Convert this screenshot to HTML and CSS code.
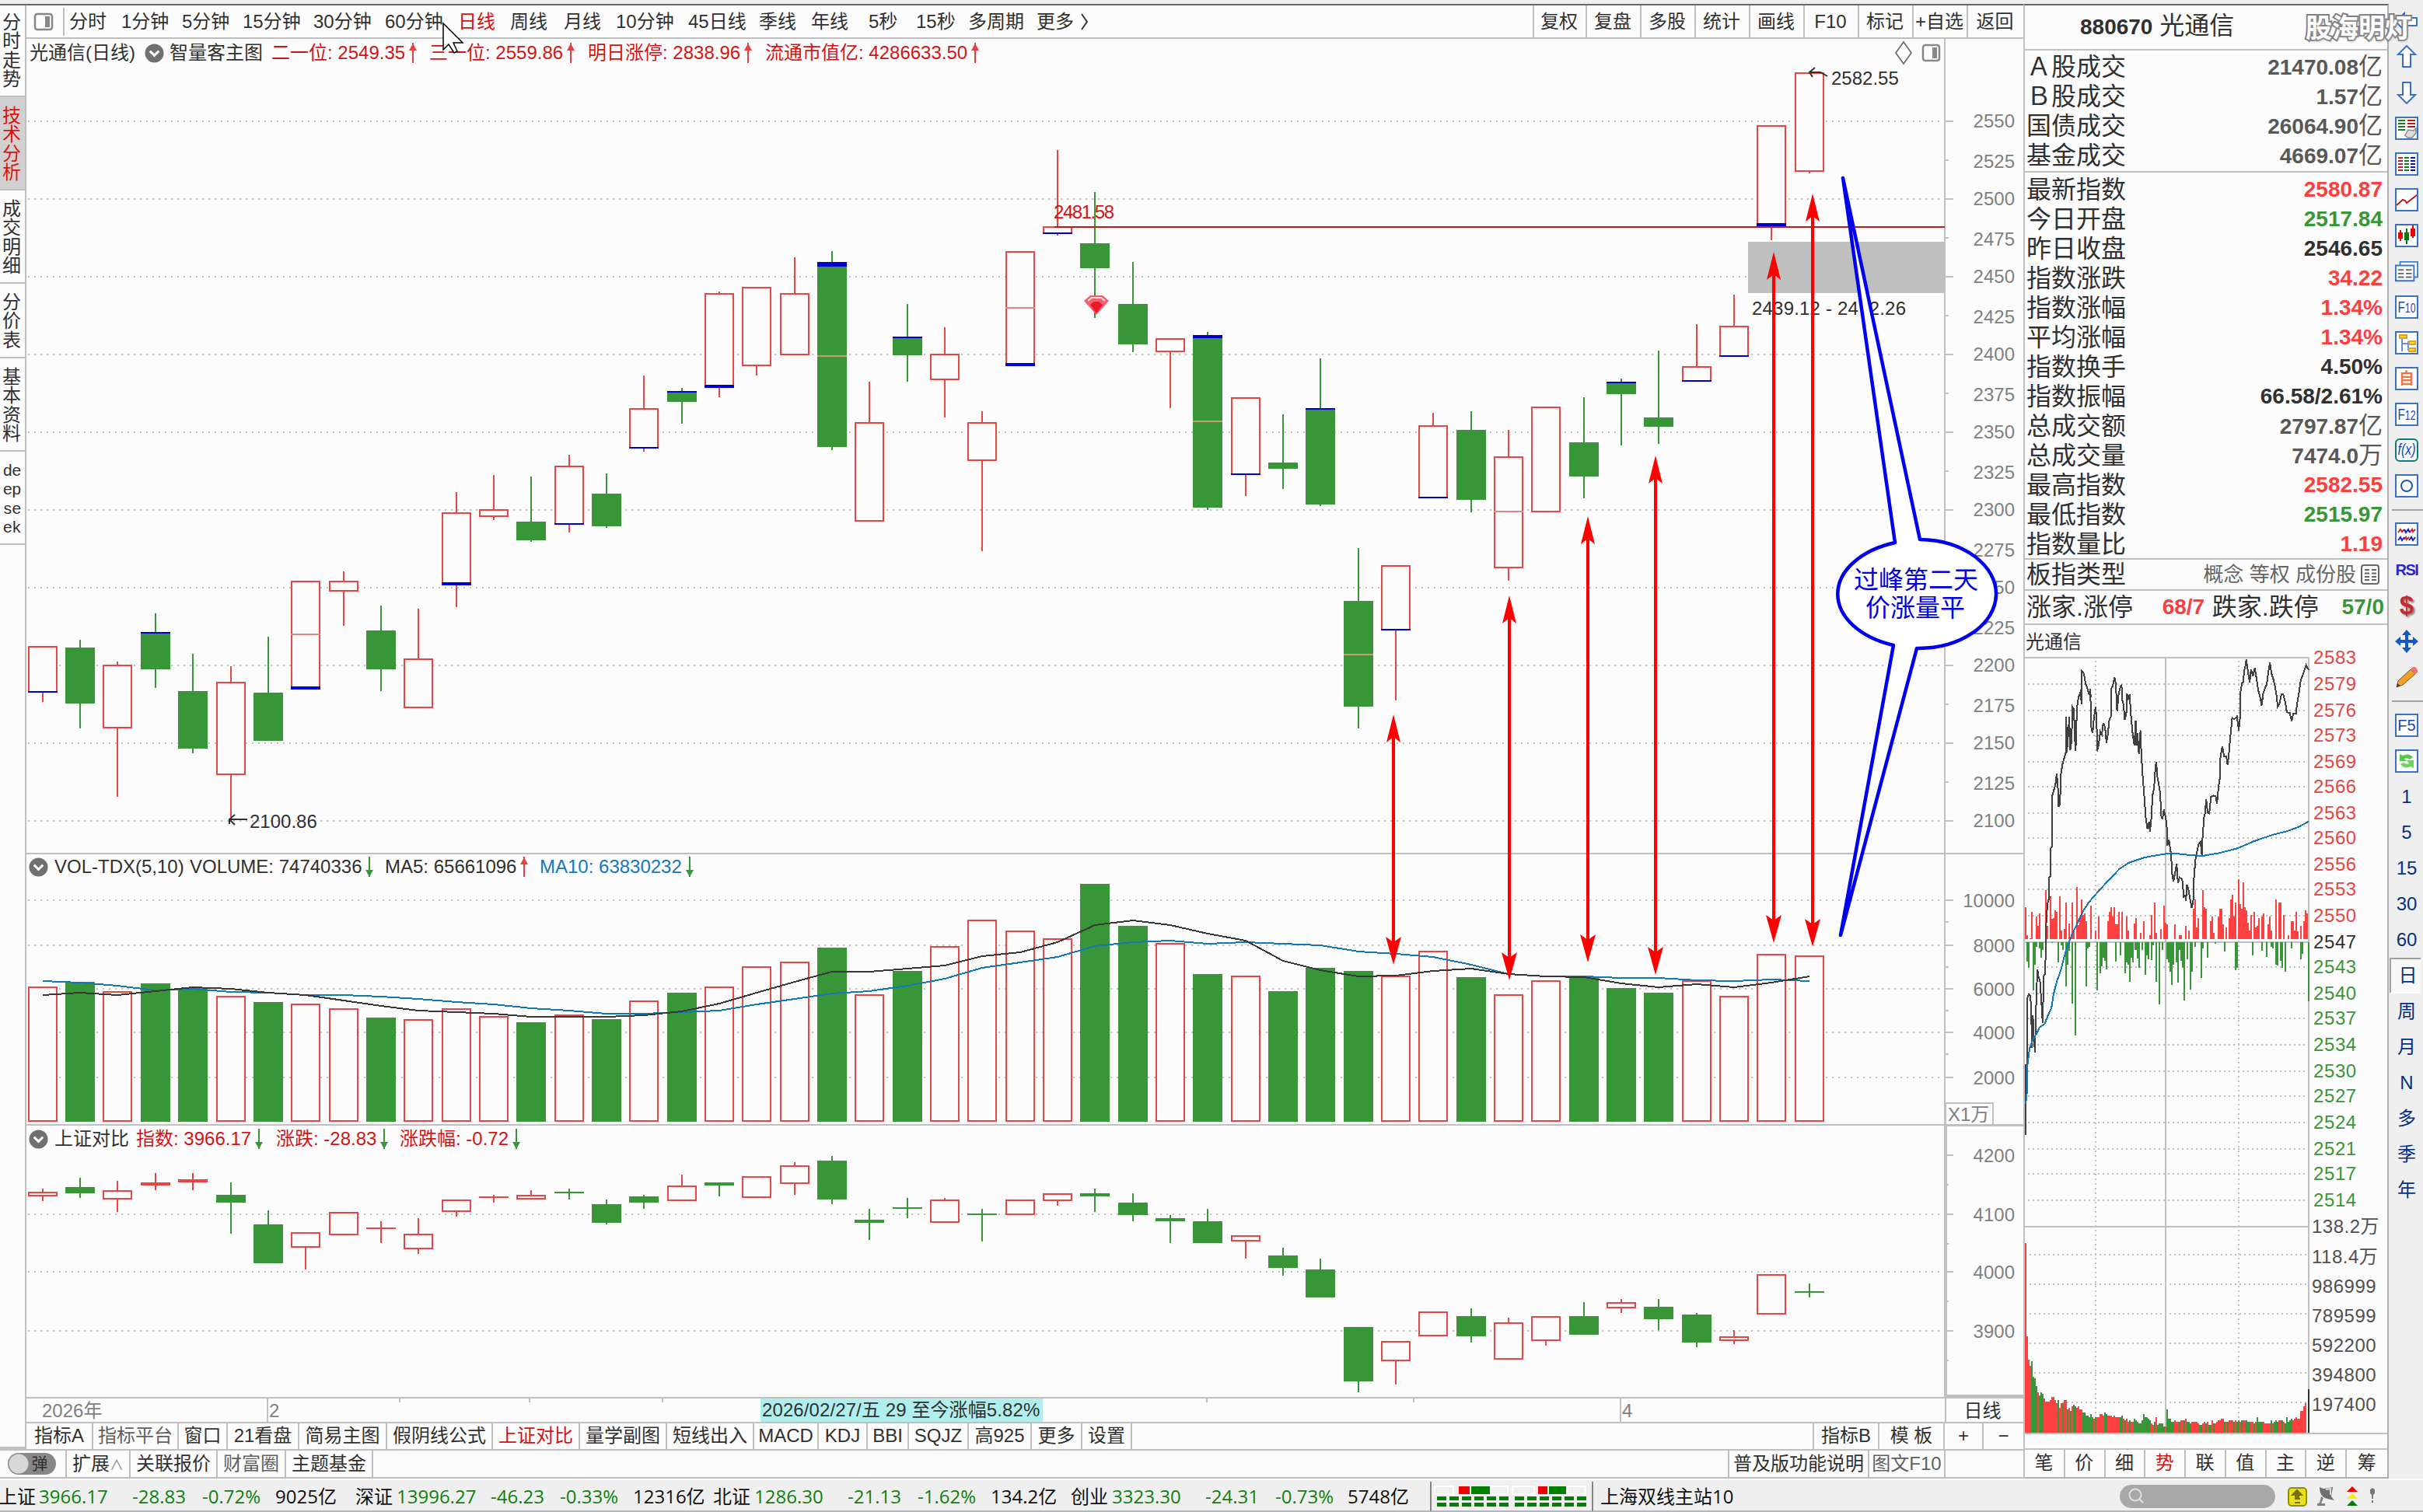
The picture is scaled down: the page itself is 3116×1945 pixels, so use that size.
FILE: index.html
```
<!DOCTYPE html>
<html lang="zh-CN">

<head>
	<meta charset="utf-8">
	<title>光通信 880670</title>
	<link rel="stylesheet" href="styles.css">
</head>

<body>
	<div class="app">
		<div class="work">
			<div class="vtabs">
				<div class="vt t1">分<br>时<br>走<br>势</div>
				<div class="vt t2 on">技<br>术<br>分<br>析</div>
				<div class="vt t3">成<br>交<br>明<br>细</div>
				<div class="vt t4">分<br>价<br>表</div>
				<div class="vt t5">基<br>本<br>资<br>料</div>
				<div class="vt t6">de<br>ep<br>se<br>ek</div>
			</div>

			<div class="center">
				<div class="toolbar">
					<div class="paneicon"><svg width="26" height="24" viewBox="0 0 26 24"><rect x="2" y="2" width="22" height="20" rx="3" fill="none" stroke="#888" stroke-width="2.5"/><rect x="15" y="5" width="6" height="14" fill="#888"/></svg></div>
					<div class="periods">
						<span>分时</span><span>1分钟</span><span>5分钟</span><span>15分钟</span><span>30分钟</span><span>60分钟</span><span class="red">日线</span><span>周线</span><span>月线</span><span>10分钟</span><span>45日线</span><span>季线</span><span>年线</span><span>5秒</span><span>15秒</span><span>多周期</span><span>更多<svg width="14" height="24" viewBox="0 0 14 24"><path d="M4 2l7 10-7 10" fill="none" stroke="#333" stroke-width="2"/></svg></span>
					</div>
					<div class="actions">
						<span>复权</span><span>复盘</span><span>多股</span><span>统计</span><span>画线</span><span>F10</span><span>标记</span><span>+自选</span><span>返回</span>
					</div>
				</div>

				<div class="pane main">
					<div class="head">
						<span>光通信(日线)</span>
						<svg class="drop" viewBox="0 0 26 26"><circle cx="13" cy="13" r="12.5" fill="#707070"/><path d="M7 10l6 6 6-6" fill="none" stroke="#fff" stroke-width="3"/></svg>
						<span>智量客主图</span>
						<span class="red">二一位: 2549.35<i class="up"></i></span>
						<span class="red">三一位: 2559.86<i class="up"></i></span>
						<span class="red">明日涨停: 2838.96<i class="up"></i></span>
						<span class="red">流通市值亿: 4286633.50<i class="up"></i></span>
						<svg class="corner" width="62" height="26" viewBox="0 0 62 26"><path d="M12 -1l10 14-10 14L2 13z" fill="none" stroke="#666" stroke-width="1.6"/><rect x="37" y="3" width="21" height="20" rx="3" fill="none" stroke="#888" stroke-width="2.5"/><rect x="49" y="6" width="6" height="14" fill="#888"/></svg>
					</div>
					<svg id="kline" width="2569" height="1011" viewBox="34 86 2569 1011"></svg>
				</div>

				<div class="pane vol">
					<div class="head">
						<svg class="drop" viewBox="0 0 26 26"><circle cx="13" cy="13" r="12.5" fill="#707070"/><path d="M7 10l6 6 6-6" fill="none" stroke="#fff" stroke-width="3"/></svg>
						<span>VOL-TDX(5,10)</span>
						<span>VOLUME: 74740336<i class="down"></i></span>
						<span>MA5: 65661096<i class="up"></i></span>
						<span class="blue">MA10: 63830232<i class="down"></i></span>
					</div>
					<svg id="volume" width="2569" height="315" viewBox="34 1131 2569 315"></svg>
				</div>

				<div class="pane cmp">
					<div class="head">
						<svg class="drop" viewBox="0 0 26 26"><circle cx="13" cy="13" r="12.5" fill="#707070"/><path d="M7 10l6 6 6-6" fill="none" stroke="#fff" stroke-width="3"/></svg>
						<span>上证对比</span>
						<span class="red">指数: 3966.17<i class="down"></i></span>
						<span class="red">涨跌: -28.83<i class="down"></i></span>
						<span class="red">涨跌幅: -0.72<i class="down"></i></span>
					</div>
					<svg id="compare" width="2569" height="315" viewBox="34 1482 2569 315"></svg>
				</div>

				<div class="dates">
					<span class="d1">2026年</span><span class="d2">2</span>
					<span class="now">2026/02/27/五 29 至今涨幅5.82%</span>
					<span class="d4">4</span><span class="cyc">日线</span>
				</div>
				<div class="indic">
					<span>指标A</span><span class="dim">指标平台</span><span>窗口</span><span>21看盘</span><span>简易主图</span><span>假阴线公式</span><span class="red">上证对比</span><span>量学副图</span><span>短线出入</span><span>MACD</span><span>KDJ</span><span>BBI</span><span>SQJZ</span><span>高925</span><span>更多</span><span>设置</span><b></b><span>指标B</span><span>模 板</span><span>+</span><span>−</span>
				</div>
			</div>

			<div class="bottom">
				<span class="tog"><i>弹</i></span><span>扩展<small>∧</small></span><span>关联报价</span><span class="dim">财富圈</span><span>主题基金</span><b></b><span>普及版功能说明</span><span class="dim">图文F10</span><span></span>
			</div>
		</div>

		<div class="quote">
			<div class="name"><b>880670</b> 光通信</div>
			<div class="rows gray">
				<p><span>Ａ股成交</span><b>21470.08<i>亿</i></b></p>
				<p><span>Ｂ股成交</span><b>1.57<i>亿</i></b></p>
				<p><span>国债成交</span><b>26064.90<i>亿</i></b></p>
				<p><span>基金成交</span><b>4669.07<i>亿</i></b></p>
			</div>
			<div class="rows">
				<p><span>最新指数</span><b class="r">2580.87</b></p>
				<p><span>今日开盘</span><b class="g">2517.84</b></p>
				<p><span>昨日收盘</span><b>2546.65</b></p>
				<p><span>指数涨跌</span><b class="r">34.22</b></p>
				<p><span>指数涨幅</span><b class="r">1.34%</b></p>
				<p><span>平均涨幅</span><b class="r">1.34%</b></p>
				<p><span>指数换手</span><b>4.50%</b></p>
				<p><span>指数振幅</span><b>66.58/2.61%</b></p>
				<p class="gray"><span>总成交额</span><b>2797.87<i>亿</i></b></p>
				<p class="gray"><span>总成交量</span><b>7474.0<i>万</i></b></p>
				<p><span>最高指数</span><b class="r">2582.55</b></p>
				<p><span>最低指数</span><b class="g">2515.97</b></p>
				<p><span>指数量比</span><b class="r">1.19</b></p>
			</div>
			<div class="kind"><span>板指类型</span><em>概念 等权 成份股</em><svg width="26" height="28" viewBox="0 0 26 28"><rect x="2" y="2" width="22" height="24" rx="3" fill="none" stroke="#666" stroke-width="2"/><path d="M6 8h6M6 12.500h6M6 17h6M6 21h6M15 8h6M15 12.500h6M15 17h6M15 21h6" stroke="#666" stroke-width="2"/></svg></div>
			<div class="updown"><span>涨家.涨停</span><b class="r">68/7</b><span>跌家.跌停</span><b class="g">57/0</b></div>
			<div class="mini">光通信</div>
			<svg id="intraday" width="466" height="1018" viewBox="2604 845 466 1018"></svg>
			<div class="qtabs"><span>笔</span><span>价</span><span>细</span><span class="red">势</span><span>联</span><span>值</span><span>主</span><span>逆</span><span>筹</span></div>
		</div>

		<div class="tools">
			<div class="back"><svg viewBox="0 0 30 30"><path d="M1 15L12 4v6h16v10H12v6z" fill="#fff" stroke="#3a70c8" stroke-width="2"/></svg></div>
			<div><svg viewBox="0 0 30 30"><path d="M15 1l11 11h-6v16H10V12H4z" fill="#fff" stroke="#3a70c8" stroke-width="2"/></svg></div>
			<div><svg viewBox="0 0 30 30"><path d="M15 29L4 18h6V2h10v16h6z" fill="#fff" stroke="#3a70c8" stroke-width="2"/></svg></div>
			<div><svg class="bx" viewBox="2 2 26 26"><path d="M4 5h9M4 9h9M4 13h9M4 17h9" stroke="#1a7a1a" stroke-width="2"/><path d="M16 5h10M16 9h10M16 13h10" stroke="#c01818" stroke-width="2"/><path d="M13 24l4-7 7 1 3-3v6l-5 6h-6z" fill="#ddd" stroke="#888" stroke-width="1.500"/></svg></div>
			<div><svg class="bx" viewBox="2 2 26 26"><path d="M4 7h6M4 11h6M4 15h6M4 19h6M4 23h6" stroke="#c02020" stroke-width="2"/><path d="M12 7h6M12 11h6M12 15h6M12 19h6M12 23h6" stroke="#1a7a1a" stroke-width="2"/><path d="M20 7h6M20 11h6M20 15h6M20 19h6M20 23h6" stroke="#1010b0" stroke-width="2"/></svg></div>
			<div><svg class="bx" viewBox="2 2 26 26"><path d="M2 22l8-7 3 1 2 3L28 9" fill="none" stroke="#c01818" stroke-width="2"/></svg></div>
			<div><svg class="bx" viewBox="2 2 26 26"><path d="M4 11h6v8H4zM6 8h2v14H6zM20 6h6v10h-6zM22 2h2v16h-2z" fill="#f00000"/><path d="M12 11h6v10h-6zM14 6h2v20h-2z" fill="#087808"/></svg></div>
			<div><svg viewBox="0 0 32 30"><path d="M7 2h24v21H7z" fill="#fff" stroke="#3a80e0" stroke-width="2"/><path d="M1 7h25v21H1z" fill="#fff" stroke="#3a70c8" stroke-width="2"/><path d="M4 13h8M15 13h8M4 18h8M15 18h8M4 23h8M15 23h8" stroke="#666" stroke-width="2"/></svg></div>
			<div><svg class="bx" viewBox="2 2 26 26"><text x="15" y="22" text-anchor="middle" textLength="23" lengthAdjust="spacingAndGlyphs">F<tspan font-size="16">10</tspan></text></svg></div>
			<div><svg class="bx" viewBox="2 2 26 26"><path d="M9 10v16M9 16h8v8h3M17 13v4" fill="none" stroke="#6a90d8" stroke-width="2"/><path d="M6 5h9v4H6zM18 13h8v4h-8zM18 22h8v4h-8z" fill="#ffe020" stroke="#e0a020" stroke-width="2"/></svg></div>
			<div><svg class="bx" viewBox="2 2 26 26"><text class="zi" x="15" y="22" text-anchor="middle">自</text></svg></div>
			<div><svg class="bx" viewBox="2 2 26 26"><text x="15" y="22" text-anchor="middle" textLength="23" lengthAdjust="spacingAndGlyphs">F<tspan font-size="16">12</tspan></text></svg></div>
			<div><svg viewBox="0 0 30 30"><rect x="1" y="1" width="28" height="28" rx="5" fill="#f4fafa" stroke="#107878" stroke-width="2"/><text x="15" y="21" text-anchor="middle" font-style="italic" textLength="23" lengthAdjust="spacingAndGlyphs">f(x)</text></svg></div>
			<div><svg class="bx" viewBox="2 2 26 26"><circle cx="15" cy="15" r="7" fill="none" stroke="#2058b0" stroke-width="2"/></svg></div>
			<hr>
			<div><svg class="bx" viewBox="2 2 26 26"><path d="M4 13l3-4 2 3 3-3M19 13l3-4 1 3 3-3M12 22l2-3 1 3 3-3" fill="none" stroke="#d02020" stroke-width="2"/><path d="M12 9l2 4 3-4 2 4M4 23l3-4 2 4 3-4M18 23l3-4 2 4 3-4" fill="none" stroke="#2020d0" stroke-width="2"/></svg></div>
			<div class="rsi">RSI</div>
			<div class="cash">$</div>
			<div><svg viewBox="0 0 30 30"><path d="M15 0l6 7h-4v6h6V9l7 6-7 6v-4h-6v6h4l-6 7-6-7h4v-6H7v4l-7-6 7-6v4h6V7H9z" fill="#1458c8"/></svg></div>
			<div><svg viewBox="0 0 30 30"><path d="M2 28l2-8L20 5l6 6L10 25z" fill="#f0a028" stroke="#7a5a30" stroke-width="1"/><path d="M20 5l3-3q3-1 5 2t1 5l-3 2z" fill="#e87880"/><path d="M2 28l1-5 4 3z" fill="#444"/></svg></div>
			<hr>
			<div><svg class="bx" viewBox="2 2 26 26"><text x="15" y="22" text-anchor="middle">F5</text></svg></div>
			<div><svg class="bx" viewBox="2 2 26 26"><path d="M6 15V6l4 2q8-4 13 2l-4 3q-4-3-7-1l3 3z" fill="#58c848"/><path d="M24 14v10l-4-2q-8 4-13-3l4-2q4 3 7 1l-3-4z" fill="#70d060"/></svg></div>
			<div>1</div><div>5</div><div>15</div><div>30</div><div>60</div><div class="sel">日</div><div>周</div><div>月</div><div>N</div><div>多</div><div>季</div><div>年</div>
		</div>

		<div class="status">
			<div class="ticker">
				<span>上证</span><em>3966.17</em><em>-28.83</em><em>-0.72%</em><span>9025亿</span>
				<span>深证</span><em>13996.27</em><em>-46.23</em><em>-0.33%</em><span>12316亿</span>
				<span>北证</span><em>1286.30</em><em>-21.13</em><em>-1.62%</em><span>134.2亿</span>
				<span>创业</span><em>3323.30</em><em>-24.31</em><em>-0.73%</em><span>5748亿</span>
			</div>
			<svg class="leds" width="208" height="38" viewBox="1839 1905 208 38">
				<path d="M1840 1905v38" stroke="#888" stroke-width="2"/>
				<path d="M1845 1911h24v10h-24zM1917 1911h22v10h-22zM1945 1911h28v10h-28zM2016 1911h23v10h-23z" fill="none" stroke="#fff" stroke-width="2"/>
				<path d="M1876 1911h14v10h-14zM1978 1911h12v10h-12z" fill="#f00000"/>
				<path d="M1892 1911h24v10h-24zM1992 1911h22v10h-22z" fill="#008000"/>
				<path d="M1848 1926.500h93M1848 1934.500h93M1948 1926.500h93M1948 1934.500h93" stroke="#008000" stroke-width="5" stroke-dasharray="12 4"/>
			</svg>
			<div class="host">上海双线主站10</div>
			<div class="search"><svg width="22" height="22" viewBox="0 0 22 22"><circle cx="9" cy="9" r="7.500" fill="none" stroke="#e0e0e0" stroke-width="2"/><path d="M14 14l5 5" stroke="#e0e0e0" stroke-width="2"/></svg></div>
			<svg class="tray" width="128" height="30" viewBox="2940 1908 128 30">
				<rect x="2943" y="1912" width="23" height="23" rx="4" fill="#e8e020" stroke="#908c10" stroke-width="2"/><path d="M2954 1915l6 6h-4v3h-4v-3h-4zM2951 1926h7M2951 1931h7" fill="#777010" stroke="#777010" stroke-width="2"/>
				<path d="M2983 1911l5 2 12-2-2 12 4 5-9-2q-10-2-10-15z" fill="#707070"/><path d="M2991 1914l6-1v8" fill="none" stroke="#ddd" stroke-width="2"/><path d="M2988 1925l-3 7h5v3h-10v-3l3-1 2-8z" fill="#808080"/>
				<path d="M3025 1910l7 7h-14z" fill="#f00000"/><path d="M3025 1919l7 7h-14z" fill="#f4f000"/><path d="M3025 1928l7 7h-14z" fill="#087808"/>
				<path d="M3048 1914l3-2 3 2v5l-3 3-3-3zM3050 1920h2v6h-2zM3050 1928h2v3h-2z" fill="#777"/>
			</svg>
		</div>

		<svg id="marks" class="overlay" width="3116" height="1945" viewBox="0 0 3116 1945"></svg>
		<div class="wm">股海明灯</div>
	</div>
	<script src="chart.js"></script>
</body>

</html>
```
FILE: styles.css
```
* {
	box-sizing:border-box;
}

body {
	margin:0;
	width:3116px;
	height:1945px;
	overflow:hidden;
	background:#efefef;
	color:#303030;
	font:24px/28px "Liberation Sans","Noto Sans CJK SC",sans-serif;
	white-space:nowrap;
}

p {
	margin:0;
}

i, em {
	font-style:normal;
}

svg {
	display:block;
	flex:none;
}

.red {
	color:#d41414;
}

.blue {
	color:#1478c0;
}

.dim {
	color:#606060;
}

.app {
	position:relative;
	height:1945px;
	padding-top:5px;
	display:grid;
	grid-template-columns:2602px 470px 44px;
	grid-template-rows:1897px 43px;
	border-bottom:2px solid #b0b8c0;
}

/* left part : side tabs, charts, bottom tabs */
.work {
	display:grid;
	grid-template-columns:34px 2568px;
	grid-template-rows:1857px 38px;
	background:#fcfcfc;
	border-top:2px solid #666;
}

.vtabs {
	display:flex;
	flex-direction:column;
	border-right:2px solid #c0c0c0;
	border-bottom:3px solid #c0c0c0;
	line-height:24.3px;
	text-align:center;
	padding-right:2px;
}

.vt {
	display:flex;
	flex-direction:column;
	justify-content:center;
	margin-right:-2px;
	border-bottom:2px solid #c0c0c0;
	padding:3px 2px 0 0;
}
.t1 { height:118px; padding-top:10px; justify-content:flex-start; }
.t2 { height:120px; }
.t3 { height:120px; }
.t4 { height:96px; }
.t5 { height:120px; }
.t6 {
	height:120px;
	padding-top:7px;
	font-family:"Liberation Mono",monospace;
	font-size:21px;
	letter-spacing:-1px;
}
.vt.on {
	background:#d0d0d0;
	color:#e01010;
}

.center {
	display:flex;
	flex-direction:column;
}

.toolbar {
	height:43px;
	display:flex;
	align-items:center;
	border-bottom:2px solid #c0c0c0;
}

.paneicon {
	width:49px;
	height:36px;
	padding:6px 0 0 9px;
	border-right:2px solid #c0c0c0;
}

.periods {
	flex:1;
	display:grid;
	padding-left:6px;
	grid-template-columns:67px 78px 78px 91px 92px 94px 67px 69px 67px 93px 91px 67px 74px 61px 67px 88px 90px;
}
.periods svg {
	display:inline-block;
	vertical-align:-4px;
	margin-left:6px;
}

.actions {
	display:flex;
	align-self:stretch;
}
.actions span {
	width:70px;
	padding-right:2px;
	line-height:41px;
	text-align:center;
	border-left:2px solid #c0c0c0;
}
.actions span:first-child { width:68px; }
.actions span:last-child { width:73px; }

.head {
	width:2468px;
	display:grid;
	align-items:center;
	border-right:2px solid #c0c0c0;
	position:relative;
}
.main .head { height:36px; padding-left:4px; grid-template-columns:148px 32px 131px 203px 204px 228px 1452px 62px; }
.vol .head { height:32px; padding-left:3px; grid-template-columns:33px 174px 251px 199px 300px; }
.cmp .head { height:34px; padding-left:3px; grid-template-columns:33px 105px 180px 159px 300px; }

.vol, .cmp {
	border-top:2px solid #c0c0c0;
}
.pane svg {
	overflow:visible;
}

.drop {
	width:25px;
	height:25px;
}

/* trend arrows behind a value */
.up, .down {
	display:inline-block;
	width:10px;
	height:26px;
	margin-left:5px;
	vertical-align:-5px;
	background:linear-gradient(#e84040,#e84040) center/2px 100% no-repeat;
	position:relative;
}
.down {
	background-image:linear-gradient(#389638,#389638);
}
.up:before, .down:before {
	content:"";
	position:absolute;
	left:0;
	top:1px;
	border:5px solid transparent;
	border-top:0;
	border-bottom:9px solid #e84040;
}
.down:before {
	top:17px;
	border-bottom:0;
	border-top:9px solid #389638;
}

.dates {
	height:32px;
	display:grid;
	grid-template-columns:309px 635px 363px 742px 418px 101px;
	border-top:2px solid #c0c0c0;
	line-height:32px;
	color:#808080;
}
.dates .d1 { padding-left:20px; }
.dates .d2, .dates .d4 { border-left:2px solid #c0c0c0; padding-left:1px; }
.dates .d4 { grid-column:5; }
.dates .now {
	background:#b0eeee;
	color:#303030;
	padding-left:2px;
	letter-spacing:.1px;
	line-height:29px;
}
.dates .cyc {
	border-left:2px solid #c0c0c0;
	color:#303030;
	text-align:center;
	padding-right:6px;
}

.indic {
	flex:1;
	display:grid;
	grid-template-columns:86px 110px 63px 92px 113px 136px 112px 112px 112px 83px 63px 53px 77px 81px 65px 64px 877px 84px 84px 50px 51px;
	border-top:2px solid #c0c0c0;
	line-height:32px;
}
.indic span {
	text-align:center;
	border-right:2px solid #c0c0c0;
}
.indic b {
	border-right:2px solid #c0c0c0;
}
.indic span:last-child {
	border:0;
}

.bottom {
	grid-column:1 / 3;
	display:grid;
	grid-template-columns:86px 82px 112px 88px 112px 1744px 180px 98px 100px;
	border-top:2px solid #c0c0c0;
	border-bottom:2px solid #c0c0c0;
	line-height:34px;
}
.bottom > * {
	text-align:center;
	border-right:2px solid #c0c0c0;
}
.bottom > :last-child {
	border:0;
}
.bottom small {
	font-size:18px;
	color:#888;
}

.tog i {
	display:block;
	width:62px;
	height:28px;
	margin:3px 0 0 10px;
	border-radius:14px;
	background:radial-gradient(circle at 14px 14px,#d8d8d8 12px,#888 13px);
	line-height:28px;
	font-size:21px;
	padding-left:20px;
}

/* quote panel */
.quote {
	background:#fcfcfc;
	border:2px solid #b0b0b0;
	border-top-color:#666;
	border-left-color:#c0c0c0;
	font-size:32px;
	display:flex;
	flex-direction:column;
}
.quote b {
	font-size:28px;
}

.name {
	height:58px;
	line-height:52px;
	padding-left:71px;
	border-bottom:2px solid #c0c0c0;
}

.rows {
	border-bottom:2px solid #c0c0c0;
	height:498px;
	padding:3px 6px 0 2px;
}
.rows.gray {
	height:157px;
	padding-top:2px;
}
.rows p {
	display:flex;
	justify-content:space-between;
	height:38px;
	line-height:38px;
}
.rows i {
	font-weight:normal;
	font-size:31px;
}
.gray b {
	color:#585858;
}
.quote .r { color:#f84040; }
.quote .g { color:#389638; }

.kind, .updown {
	display:flex;
	align-items:center;
	height:40px;
	padding-left:2px;
	border-bottom:2px solid #c0c0c0;
}
.kind em {
	flex:1;
	text-align:right;
	font-size:26px;
	color:#666;
}
.kind svg {
	margin:0 9px 0 5px;
}

.updown {
	height:44px;
	justify-content:space-between;
	padding-right:4px;
}
.updown b:first-of-type {
	margin:0 -20px 0 8px;
}

.mini {
	height:41px;
	font-size:24px;
	line-height:43px;
	padding-left:1px;
}

#intraday {
	font-size:24px;
	overflow:visible;
}

.qtabs {
	flex:1;
	display:flex;
	border-top:2px solid #c0c0c0;
	font-size:24px;
	line-height:34px;
}
.qtabs span {
	width:52px;
	padding-right:1px;
	text-align:center;
	border-right:2px solid #c0c0c0;
}
.qtabs span:last-child {
	border:0;
}

/* right icon strip */
.tools {
	padding-left:4px;
	margin-top:-4px;
	color:#083080;
	display:flex;
	flex-direction:column;
}
.tools div {
	height:46px;
	display:flex;
	align-items:center;
	justify-content:center;
	width:38px;
}
.tools .back { height:49px; padding-top:4px; }
.tools svg {
	width:30px;
	height:30px;
}
.tools .bx {
	background:#fff;
	border:2px solid #3a70c8;
}
.tools text {
	font-size:20px;
	fill:#1848b0;
}
.tools .zi {
	fill:#f07838;
	font-weight:bold;
}
.tools hr {
	width:42px;
	height:2px;
	margin:7px 0;
	border:0;
	background:#a0a0a0;
}
.tools .rsi {
	font-weight:bold;
	font-size:20px;
	letter-spacing:-1.5px;
	color:#2828d0;
}
.tools .cash {
	font-size:33px;
	font-weight:bold;
	color:#c82830;
	text-shadow:2px 2px 2px #888;
}
.tools .sel {
	width:40px;
	background:#f8f8f8;
	border:2px solid #a0a0a0;
	border-right:0;
	border-bottom-color:#fff;
	margin-left:-3px;
	padding-left:5px;
}

.status {
	grid-column:1 / 4;
	display:flex;
	align-items:center;
	border-top:2px solid #fafafa;
	font-family:"Open Sans","Noto Sans CJK SC",sans-serif;
	color:#101010;
}
.ticker {
	width:1839px;
	display:grid;
	grid-template-columns:50px 120px 90px 94px 103px 53px 121px 89px 94px 103px 53px 120px 90px 94px 103px 53px 120px 90px 93px 100px;
}
.ticker em {
	color:#108010;
}
.ticker span:first-child {
	margin-left:-2px;
}
.host {
	border-left:2px solid #888;
	height:38px;
	line-height:38px;
	width:679px;
	padding-left:9px;
}
.search {
	width:200px;
	height:30px;
	border-radius:15px;
	background:#a8a8a8;
	padding:4px 11px;
}
.tray {
	margin-left:14px;
}

.overlay {
	position:absolute;
	left:0;
	top:0;
}
.note {
	font-size:32px;
	fill:#0000e0;
}
.ax {
	font-size:24px;
	fill:#808080;
}
.wm {
	position:absolute;
	left:2965px;
	top:9px;
	font:bold 34px/50px "Noto Sans CJK SC",sans-serif;
	color:#fff;
	-webkit-text-stroke:4px #808080;
	paint-order:stroke fill;
	text-shadow:1px 2px 3px #999;
}
```
FILE: chart.js
```
var RED="#e64646",GREEN="#389638",GRAY="#c0c0c0",BG="#fcfcfc",BLUE="#0000cc";

function g(i){return document.getElementById(i);}
function X(i){return Math.round(54.8+48.34*i);}
function rect(x,y,w,h,f,s){
	return '<rect x="'+x+'" y="'+y+'" width="'+w+'" height="'+h+'" fill="'+f+'"'+(s?' stroke="'+s+'" stroke-width="2"':'')+'/>';
}
function line(a,b,c,d,s,x){
	return '<line x1="'+a+'" y1="'+b+'" x2="'+c+'" y2="'+d+'" stroke="'+s+'" stroke-width="2" '+(x||'')+'/>';
}
function text(x,y,t,o){return '<text x="'+x+'" y="'+y+'" '+(o||'')+'>'+t+'</text>';}
function wrap(s){return '<g shape-rendering="crispEdges">'+s+'</g>';}

// one candle: colour, high, top, bottom, low
function candle(i,c){
	var x=X(i),s='',col=c[0]=="r"?RED:GREEN;
	s+=rect(x-1,c[1],2,c[4]-c[1],col);
	if(c[0]=="g"||c[3]-c[2]<5) s+=rect(x-19,c[2],38,c[3]-c[2],col);
	else s+=rect(x-18,c[2]+1,36,c[3]-c[2]-2,BG,col);
	return s;
}

// 5th: blue edge (1 thin, 2 thick, 3 heavy), 6th: half line
var K=[
["r",831,831,891,903,1],["g",823,833,905,937],["r",851,855,937,1025],["g",789,813,861,885,1],["g",841,889,963,969],
["r",857,877,997,1051],["g",819,891,953,953],["r",747,747,887,887,2,816],["r",735,747,761,805],["g",779,811,861,889],
["r",783,847,911,911],["r",633,659,753,781,2],["r",611,655,665,669],["g",613,671,695,697],["r",585,599,675,685,1],
["g",609,635,677,679],["r",483,525,577,581,1],["g",499,503,517,545,1],["r",375,377,499,511,2],["r",369,369,471,483],
["r",331,377,457,457],["g",323,337,575,579,3,458],["r",491,543,671,671],["g",391,433,457,491,1],["r",421,455,489,537],
["r",529,543,593,709],["r",323,323,471,471,2,396],["r",193,291,301,303,1],["g",247,313,345,409],["g",337,391,443,453],
["r",435,435,453,525],["g",427,431,653,656,2,542],["r",511,511,611,638,1],["g",533,595,603,629],["g",461,525,649,651,1],
["g",705,773,909,937,0,842],["r",727,727,811,901,1],["r",531,547,641,641,1],["g",529,553,643,659],["r",553,587,731,747,0,658],
["r",523,523,659,659],["g",511,569,613,641],["g",487,491,507,573,1],["g",451,537,549,571],["r",417,471,491,491,1],
["r",379,419,459,459,1],["r",161,161,291,309,2],["r",93,93,221,223]];

var V=[1269,1263,1275,1265,1271,1281,1289,1291,1297,1309,1311,1297,1307,1315,1305,1311,1287,1277,1269,1243,1237,1219,1279,1249,1217,1183,1197,1207,1137,1191,1213,1253,1255,1275,1245,1249,1255,1223,1257,1279,1261,1257,1271,1277,1261,1281,1227,1229];
var M5=[1280,1277,1280,1275,1270,1272,1277,1280,1287,1294,1300,1302,1304,1308,1308,1308,1306,1301,1291,1277,1263,1250,1250,1246,1242,1230,1225,1212,1190,1184,1190,1201,1210,1236,1248,1256,1255,1249,1246,1253,1256,1257,1265,1270,1266,1270,1264,1256];
var M10=[1262,1264,1268,1274,1272,1276,1277,1280,1280,1282,1285,1289,1292,1297,1300,1304,1304,1302,1300,1292,1285,1278,1275,1268,1259,1245,1238,1231,1217,1212,1210,1214,1212,1214,1216,1224,1227,1231,1241,1253,1256,1256,1258,1258,1261,1262,1260,1262];

var C=[
["r",1529,1533,1539,1545],["g",1515,1527,1535,1541],["r",1519,1531,1543,1559],["r",1509,1521,1525,1531],["r",1509,1517,1521,1531],
["g",1521,1537,1547,1587],["g",1557,1575,1625,1625],["r",1585,1585,1605,1633],["r",1559,1559,1589,1589],["r",1571,1579,1581,1599],
["r",1567,1587,1607,1613],["r",1543,1543,1559,1565],["r",1537,1539,1541,1547],["r",1531,1537,1543,1543],["g",1529,1533,1535,1543],
["g",1543,1549,1573,1575],["g",1537,1539,1547,1555],["r",1511,1525,1545,1545],["g",1521,1521,1525,1539],["r",1513,1513,1541,1541],
["r",1495,1499,1523,1537],["g",1487,1493,1543,1549],["g",1555,1569,1573,1595],["g",1541,1553,1555,1567],["r",1541,1543,1573,1573],
["g",1555,1561,1563,1597],["r",1543,1543,1563,1563],["r",1535,1535,1545,1551],["g",1529,1535,1539,1559],["g",1535,1547,1563,1571],
["g",1563,1567,1571,1599],["g",1555,1571,1599,1599],["r",1589,1589,1597,1619],["g",1605,1615,1631,1641],["g",1619,1633,1669,1669],
["g",1707,1707,1777,1791],["r",1725,1725,1751,1781],["r",1687,1687,1719,1719],["g",1683,1693,1719,1727],["r",1695,1701,1749,1749],
["r",1693,1693,1725,1731],["g",1675,1693,1717,1717],["r",1671,1675,1683,1689],["g",1671,1681,1697,1711],["g",1689,1691,1727,1733],
["r",1711,1719,1725,1729],["r",1639,1639,1691,1691],["g",1651,1661,1663,1669]];

var dots='stroke-dasharray="2 6"';
var s,t,i,y,p;

// daily candles
s='';t='';
for(p=2550;p>=2100;p-=25){
	y=156+(2550-p)*2;
	if(p%50==0) s+=line(36,y,2500,y,GRAY,dots);
	s+=line(2501,y,p%50?2506:2512,y,GRAY);
	t+=text(2591,y+(p%50?10:8),p,'class="ax" text-anchor="end"');
}
s+=rect(2500,86,2,1011,GRAY)+rect(2248,311,253,66,"#bfbfbf");
K.forEach(function(c,i){
	s+=candle(i,c);
	var x=X(i)-19,h=c[5]==3?6:c[5]==2?4:2;
	if(c[5]) s+=rect(x,c[0]=="r"?c[3]-h:c[2],38,h,BLUE);
	if(c[6]) s+=rect(x,c[6]-1,38,2,c[0]=="r"?"#e08484":"#c0a070");
});
s+=rect(1356,291,1145,2,"#b81c1c");
t+=text(1355,281,"2481.58",'fill="#d41414" textLength="78"');
t+=text(2355,109,"2582.55",'fill="#303030"')+text(321,1065,"2100.86",'fill="#303030"')+text(2253,405,"2439.12 - 2472.26",'fill="#303030" textLength="198"');
t+='<path d="M2350 98l-9-5h-14m7-6l-7 6 4 6M318 1054h-23v6m7-12l-7 6 7 7" fill="none" stroke="#303030" stroke-width="2"/>';
t+='<path d="M1394 387l8-7h16l8 7-16 18z" fill="#f06070"/><path d="M1399 387l5-4h12l5 4" fill="none" stroke="#ffd8d8" stroke-width="2"/><path d="M1402 392l5-4h6l5 4-8 11z" fill="#e81828"/>';
g("kline").innerHTML=wrap(s)+t;

// volume
s='';t='';
[1158,1216,1272,1328,1386].forEach(function(y,i){
	s+=line(36,y,2500,y,GRAY,dots)+line(2501,y,2512,y,GRAY);
	if(i<4) s+=line(2501,y+28,2506,y+28,GRAY);
	t+=text(2591,y+9,10000-i*2000,'class="ax" text-anchor="end"');
});
V.forEach(function(v,i){
	if(K[i][0]=="g") s+=rect(X(i)-19,v,38,1443-v,GREEN);
	else s+=rect(X(i)-18,v+1,36,1441-v,BG,RED);
});
s+=rect(2500,1131,2,316,GRAY)+rect(2502,1419,61,28,"none",GRAY);
[[M10,"#1478b4"],[M5,"#383838"]].forEach(function(m){
	s+='<polyline fill="none" stroke-width="2" stroke="'+m[1]+'" points="'+m[0].map(function(v,i){return X(i)+","+v;}).join(" ")+'"/>';
});
t+=text(2505,1442,"X1万",'class="ax"');
g("volume").innerHTML=wrap(s)+t;

// compare
s='';t='';
[1486,1562,1636,1712].forEach(function(y,i){
	if(i) s+=line(36,y,2500,y,GRAY,dots);
	s+=line(2504,y,2512,y,GRAY)+line(2504,y+38,2506,y+38,GRAY);
	t+=text(2591,y+9,4200-i*100,'class="ax" text-anchor="end"');
});
C.forEach(function(c,i){s+=candle(i,c);});
s+=rect(2500,1448,4,349,GRAY)+rect(2504,1446,99,3,GRAY)+rect(2504,1794,99,3,GRAY);
g("compare").innerHTML=wrap(s)+t;

// intraday, own units for the traces
var P="73,1792 73,1540 79,1540 79,1300 85,1285 90,1290 93,1320 97,1480 100,1360 104,1440 108,1495 112,1340 117,1195 121,1220 127,1240 132,1310 137,1390 141,1220 147,1210 149,1050 155,960 161,940 161,865 167,860 167,760 172,755 173,570 179,550 185,530 190,490 195,550 197,610 202,600 206,490 212,455 218,435 224,415 226,285 228,415 234,340 237,285 241,405 246,370 249,250 255,260 257,350 261,410 266,255 272,215 278,200 284,240 285,122 292,130 298,165 304,180 310,200 318,215 316,185 320,325 325,345 330,290 336,250 340,290 342,410 348,385 354,340 360,350 365,308 372,325 377,382 382,350 388,295 394,285 395,185 401,175 407,143 412,165 417,265 423,205 430,175 434,172 436,225 441,240 446,298 452,270 454,202 460,225 464,205 470,290 476,350 482,390 487,300 490,390 494,345 499,420 505,335 508,415 514,510 520,580 525,650 531,690 537,665 541,700 547,640 550,570 556,545 562,460 565,450 568,500 576,540 580,570 582,640 588,655 593,620 600,650 606,700 606,750 612,730 620,780 624,850 629,880 635,850 641,815 646,885 652,865 662,870 668,935 674,930 676,950 680,890 686,910 692,945 698,975 704,945 706,870 712,800 718,770 724,745 731,738 736,785 739,715 745,640 748,635 752,582 758,630 764,635 770,575 780,570 788,572 793,600 799,535 805,500 806,430 813,392 820,430 828,430 833,460 838,415 845,340 850,290 858,295 868,285 875,335 880,285 881,200 887,165 892,160 895,120 901,100 903,78 909,120 916,163 921,115 928,140 935,110 942,150 948,190 955,215 961,245 967,200 975,180 980,170 986,125 992,90 998,130 1005,150 1012,180 1018,215 1021,250 1028,240 1035,205 1042,205 1050,235 1056,270 1067,272 1074,303 1080,275 1090,275 1095,235 1103,190 1108,155 1118,130 1128,100 1138,118";
var A="73,1680 79,1630 80,1540 88,1480 100,1450 115,1425 125,1405 145,1392 155,1365 170,1335 178,1285 190,1240 205,1200 218,1150 235,1100 250,1065 270,1025 290,985 310,955 340,922 380,880 425,835 460,812 520,793 565,785 620,777 700,785 740,787 795,778 870,760 930,735 1000,712 1060,697 1100,683 1138,663";
var UP="73:972 79:1072 90:1085 97:988 114:1005 120:1040 126:993 149:910 155:1040 167:932 173:1015 178:1010 184:983 190:988 202:932 208:1055 220:1050 225:955 237:1032 249:955 255:1055 266:898 272:1035 278:1010 284:943 290:1000 296:995 302:1022 319:965 336:1055 348:1005 383:1022 389:990 395:972 401:1005 407:972 412:1033 418:1033 424:990 436:988 453:1005 459:1055 482:1032 488:1010 506:1065 518:1022 541:1072 547:1000 558:955 564:1065 582:1050 594:965 600:1028 606:1033 635:1033 652:1072 658:1072 675:1038 687:1055 705:978 711:943 717:1045 722:1010 740:910 746:972 752:978 769:1022 775:1005 781:1065 798:1005 804:978 810:978 816:1033 827:1045 839:1010 845:943 851:927 857:1005 863:955 874:870 880:960 886:978 892:882 898:972 904:983 909:1027 915:1055 921:1000 933:988 939:1045 945:1038 951:1010 962:1005 968:993 986:1033 992:1005 998:1055 1015:943 1027:955 1033:955 1044:1000 1061:1072 1073:1022 1079:1022 1085:1055 1091:988 1097:1060 1108:1038 1120:1022 1126:983 1132:993";
var DN="79:1167 85:1190 102:1273 108:1180 114:1115 125:1120 131:1155 137:1125 172:1100 196:1172 208:1110 214:1125 225:1257 231:1180 237:1130 249:1318 261:1435 302:1257 308:1120 314:1115 342:1273 354:1210 360:1185 366:1155 371:1165 377:1195 412:1167 430:1145 447:1210 452:1170 458:1180 464:1240 470:1155 476:1170 487:1125 494:1158 500:1190 512:1125 524:1217 530:1145 536:1160 547:1162 553:1110 565:1240 576:1323 588:1125 606:1160 612:1170 617:1205 623:1252 629:1180 641:1170 647:1245 653:1125 659:1165 664:1190 670:1307 682:1160 693:1268 699:1205 711:1115 734:1228 740:1120 758:1155 787:1103 822:1133 863:1200 869:1190 927:1145 962:1128 980:1150 998:1115 1004:1120 1015:1180 1021:1183 1033:1165 1038:1190 1050:1205 1073:1120 1108:1160 1114:1140 1138:1312";
var MV="r625 r952 r1035 r1055 g1040 g1095 g1100 g1127 r1148 g1160 g1148 g1155 r1170 r1181 r1181 r1181 r1175 r1164 r1164 r1175 r1186 g1175 r1203 r1186 g1186 r1175 r1175 g1208 r1203 g1213 r1197 g1192 g1197 r1203 r1197 r1208 r1208 g1219 g1219 g1230 g1230 g1235 g1224 g1235 r1240 g1235 r1235 r1235 r1224 r1224 r1230 g1219 g1224 r1230 r1230 r1230 r1235 r1230 r1235 r1235 r1235 g1235 g1230 r1240 g1246 r1241 r1252 g1246 r1252 r1252 g1241 g1246 g1252 g1257 g1257 g1246 g1224 g1235 g1235 g1241 g1246 r1257 r1262 g1252 r1235 g1262 g1257 g1257 g1257 g1268 r1268 g1208 g1241 g1241 g1252 g1252 r1246 r1252 r1252 g1252 r1246 r1246 g1246 r1241 g1252 g1252 g1257 r1252 r1252 r1252 r1252 r1257 g1262 g1262 r1257 r1252 g1257 r1252 g1262 g1262 r1246 g1257 r1257 r1252 r1246 r1246 r1241 r1241 g1252 r1252 g1252 r1246 r1246 r1246 g1252 r1246 g1252 g1246 r1252 g1246 r1246 r1246 g1246 g1252 g1252 r1252 r1252 g1257 r1252 g1235 g1252 g1252 g1252 r1252 r1257 r1257 r1257 r1257 g1246 r1257 g1252 g1246 g1252 r1246 r1246 g1246 r1252 g1257 g1235 g1252 g1246 g1241 r1246 r1241 r1235 r1241 r1241 r1213 r1213 r1197 r1186".split(" ");
var vd='stroke-dasharray="2 4"',W="#404040";
s='';t='';
var gy=[846,880,914,946,980,1012,1046,1078,1112,1144,1178,1212,1244,1278,1310,1344,1378,1410,1444,1478,1510,1544];
var gp=[2583,2579,2576,2573,2569,2566,2563,2560,2556,2553,2550,2547,2543,2540,2537,2534,2530,2527,2524,2521,2517,2514];
gy.forEach(function(y,i){
	s+=line(2608,y,2969,y,GRAY,i==0||i==11?'':vd);
	t+=text(2975,y+8,gp[i],'letter-spacing=".6" fill="'+(i<11?"#e04848":i==11?"#303030":"#389638")+'"');
});
["138.2万","118.4万",986999,789599,592200,394800,197400].forEach(function(v,i){
	y=[1578,1614,1652,1690,1728,1766,1804][i];
	s+=line(2604,y,2969,y,GRAY,i?vd:'');
	t+=text(2973,y+(i?11:8),v,'letter-spacing=".5" fill="#505050"');
});
s+=line(2604,846,2610,846,GRAY)+line(2604,1212,2610,1212,GRAY);
s+=line(2695,850,2695,1844,GRAY,vd)+line(2879,850,2879,1844,GRAY,vd);
s+=line(2785,846,2785,1844,GRAY)+line(2969,846,2969,1844,GRAY)+line(2604,1844,3070,1844,GRAY);
s+='<svg x="2604" y="846" width="365" height="732" viewBox="70 73 1068 2050" preserveAspectRatio="none" overflow="visible">';
UP.split(" ").forEach(function(b){b=b.split(":");s+=rect(b[0]-3,b[1],6,1088-b[1],"#ff4040");});
DN.split(" ").forEach(function(b){b=b.split(":");s+=rect(b[0]-3,1099,6,Math.max(b[1]-1099,3),GREEN);});
s+='<g fill="none" stroke-width="2"><polyline vector-effect="non-scaling-stroke" stroke="'+W+'" points="'+P+'"/><polyline vector-effect="non-scaling-stroke" stroke="#1478b8" points="'+A+'"/></g></svg>';
MV.forEach(function(b,i){
	var h=(1290-b.slice(1))/2.727;
	s+=rect(2604+i*2,1843-h,2.2,h,b[0]=="r"?"#ff4040":GREEN);
});
s+=rect(2968,1787,2,56,"#303030");
g("intraday").innerHTML=wrap(s)+'<g>'+t+'</g>';

// hand drawn arrows and balloon
s='';
[[1792,919,1241],[1941,766,1261],[2042,664,1238],[2129,586,1254],[2281,324,1213],[2331,249,1218]].forEach(function(a){
	var x=a[0],u=a[1],d=a[2];
	s+='<path d="M'+x+' '+(u+28)+'V'+(d-28)+'" stroke="#ff0000" stroke-width="4"/>';
	s+='<path d="M'+x+' '+u+'l9 36-9-7-9 7zM'+x+' '+d+'l-10-36 10 7 10-7z" fill="#ff0000"/>';
});
s+='<path d="M2370 229L2437 698A109 70 0 0 0 2435 830L2367 1203L2465 834A100 70 0 0 0 2469 694Z" fill="#fff" stroke="#0000f0" stroke-width="4.500" stroke-linejoin="round"/>';
s+=text(2464,757,"过峰第二天",'class="note" text-anchor="middle"')+text(2463,793,"价涨量平",'class="note" text-anchor="middle"');
// mouse pointer
s+='<path d="M570 30v34l7-7 7 11 4-2-5-11h12z" fill="#fff" stroke="#000" stroke-width="1.500"/>';
// date axis ticks
[513,680,851,1551,1817].forEach(function(x){s+=rect(x,1799,2,5,GRAY);});
g("marks").innerHTML=s;
```
